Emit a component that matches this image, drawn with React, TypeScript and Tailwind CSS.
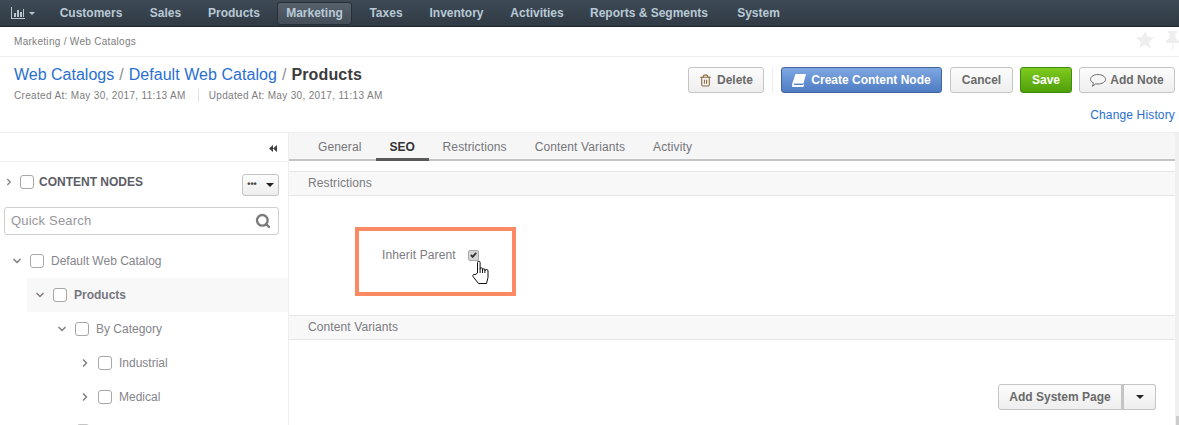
import { ChevronDown, ChevronRight, Search, Trash2 } from 'lucide-react';
import type { ReactNode } from 'react';

// widths are per item because the labels are centred in uneven cells
const NAV_ITEMS = [
  { label: 'Customers', cell: 'w-[92px]' },
  { label: 'Sales', cell: 'w-[57px]' },
  { label: 'Products', cell: 'w-[80px]' },
  { label: 'Marketing', cell: 'ml-[3px] w-[75px] rounded-[3px] border border-[#272e35] bg-gradient-to-b from-[#56616c] to-[#434e59]' },
  { label: 'Taxes', cell: 'w-[68px]' },
  { label: 'Inventory', cell: 'w-[73px]' },
  { label: 'Activities', cell: 'w-[88px]' },
  { label: 'Reports & Segments', cell: 'w-[136px]' },
  { label: 'System', cell: 'w-[83px]' },
];
const TABS = ['General', 'SEO', 'Restrictions', 'Content Variants', 'Activity'];

const Caret = () => <span className="inline-block h-0 w-0 border-x-[4px] border-t-[4px] border-x-transparent border-t-[#222]" />;

const TreeBox = () => <span className="block h-[14px] w-[14px] shrink-0 rounded-[3px] border-[1.5px] border-[#a9a6a6] bg-white" />;

const GreyButton = ({ children, className = '' }: { children: ReactNode; className?: string }) => (
  <button className={`flex items-center justify-center rounded-[3px] border border-[#c4c4c4] bg-gradient-to-b from-[#fcfcfc] to-[#eeeeee] text-xs font-bold text-[#6a6a6a] ${className}`}>
    {children}
  </button>
);

const TreeRow = ({ label, open, depth, active }: { label: string; open: boolean; depth: number; active?: boolean }) => {
  const indents = ['pl-[11px]', 'ml-[27px] pl-[7px] bg-[#f8f8f8]', 'pl-[56px]', 'pl-[79px]'];
  return (
    <div className={`flex h-[34px] items-center ${indents[depth]}`}>
      {open ? (
        <ChevronDown size={12} strokeWidth={3.5} className="mr-[7px] text-[#8b8585]" />
      ) : (
        <ChevronRight size={12} strokeWidth={3.5} className="mr-[7px] text-[#8b8585]" />
      )}
      <TreeBox />
      <span className={`ml-[7px] text-xs ${active ? 'font-bold text-[#77777f]' : 'text-[#85858c]'}`}>{label}</span>
    </div>
  );
};

const SectionBar = ({ label }: { label: string }) => (
  <div className="flex h-[25px] items-center border-y border-[#e6e6e6] bg-[#f8f8f8] pb-[1px] pl-[19px] text-xs tracking-[0.1px] text-[#7a7a7f]">{label}</div>
);

export default function App() {
  return (
    <div className="relative h-[425px] w-[1179px] overflow-hidden bg-white font-['Liberation_Sans',sans-serif]">
      {/* top nav */}
      <nav className="flex h-[27px] items-center border-b border-[#20262c] bg-gradient-to-b from-[#3e4a55] to-[#2f3a44] pl-[11px]">
        <svg width="14" height="12" viewBox="0 0 14 12" className="text-[#b9c6d0]" fill="currentColor">
          <path d="M0 0h1v11h13v1H0z" />
          <path d="M3 6h2v4H3zM6 3h2v7H6zM9 5h2v5H9zM12 2h1v8h-1z" />
        </svg>
        <span className="ml-[4px] h-0 w-0 border-x-[3px] border-t-[3px] border-x-transparent border-t-[#b9c6d0]" />
        <div className="ml-[10px] flex items-center">
          {NAV_ITEMS.map(item => (
            <span key={item.label} className={`flex h-[23px] items-center justify-center text-xs font-bold text-[#b9c9d6] ${item.cell}`}>
              {item.label}
            </span>
          ))}
        </div>
      </nav>

      {/* breadcrumb */}
      <div className="flex h-[30px] items-center justify-between border-b border-[#eeeeee] pl-[14px]">
        <span className="text-[10px] tracking-[0.3px] text-[#7d7d7d]">Marketing / Web Catalogs</span>
        <div className="mb-[4px] flex items-center gap-[12px] text-[#eeeeee]">
          <svg width="18" height="17" viewBox="0 0 18 17" fill="currentColor">
            <path d="M9 0l2.600 5.800 6.400.7-4.800 4.200 1.400 6.300L9 13.800 3.400 17l1.400-6.300L0 6.500l6.400-.7z" />
          </svg>
          <svg width="13" height="18" viewBox="0 0 13 18" fill="currentColor">
            <path d="M2 0h9v2H9.500v5L13 10v2H7.500v6h-1v-6H0v-2l3.500-3V2H2z" />
          </svg>
        </div>
      </div>

      {/* page header */}
      <header className="flex h-[76px] justify-between border-b border-[#eeeeee] pl-[14px] pr-[4px]">
        <div className="pt-[8px]">
          <div className="text-base leading-[19px] text-[#8d8d8d]">
            <span className="text-[#2a6fd0]">Web Catalogs</span>
            <span className="mx-[5px]">/</span>
            <span className="tracking-[0.05px] text-[#2a6fd0]">Default Web Catalog</span>
            <span className="mx-[5px]">/</span>
            <span className="font-bold tracking-[0.15px] text-[#3c3c3c]">Products</span>
          </div>
          <div className="mt-[4px] flex items-center text-[10px] tracking-[0.33px] text-[#7d7d7d]">
            <span>Created At: May 30, 2017, 11:13 AM</span>
            <span className="ml-[12px] mr-[10px] h-[13px] w-px bg-[#e2e2e2]" />
            <span>Updated At: May 30, 2017, 11:13 AM</span>
          </div>
        </div>
        <div className="flex flex-col items-end">
          <div className="mt-[10px] flex items-center">
            <GreyButton className="h-[26px] w-[76px] gap-[5px]">
              <Trash2 size={13} className="text-[#8a6a3f]" />
              Delete
            </GreyButton>
            <span className="mx-[8px] h-[26px] w-px bg-[#eeeeee]" />
            <button className="flex h-[26px] w-[161px] items-center justify-center gap-[5px] rounded-[3px] border border-[#41659b] bg-gradient-to-b from-[#7fa7e2] to-[#4e7cc3] text-xs font-bold text-white">
              <svg width="14" height="13" viewBox="0 0 14 13" fill="currentColor">
                <path d="M3.500 0H14l-2.500 9.500H2.500c-1 0-1.200 1.500-.2 1.500H11l.8-1 .4.400-.8 2.600H1.500C0 13-.3 11.500 0 10.500z" />
              </svg>
              Create Content Node
            </button>
            <GreyButton className="ml-[8px] h-[26px] w-[63px]">Cancel</GreyButton>
            <button className="ml-[7px] h-[26px] w-[52px] rounded-[3px] border border-[#3f8a10] bg-gradient-to-b from-[#7fcb1f] to-[#4f9f08] text-xs font-bold text-white">Save</button>
            <GreyButton className="ml-[7px] h-[26px] w-[96px] gap-[4px]">
              <svg width="16" height="13" viewBox="0 0 16 13" fill="none" stroke="#6a6a6a" strokeWidth="1">
                <path d="M8 .5c4 0 7.500 2 7.500 4.800S12 10 8 10c-.8 0-1.500 0-2.200-.2L2.500 12.300l.9-3.400C1.500 8 .5 6.800.5 5.300.5 2.500 4 .5 8 .5z" />
              </svg>
              Add Note
            </GreyButton>
          </div>
          <span className="mt-[14px] text-xs tracking-[0.15px] text-[#2a6fd0]">Change History</span>
        </div>
      </header>

      <div className="flex h-[292px]">
        {/* left tree */}
        <aside className="w-[289px] shrink-0 border-r border-[#eeeeee]">
          <div className="flex h-[29px] items-center justify-end border-b border-[#eeeeee] pr-[11px] pt-[2px]">
            <svg width="8" height="7" viewBox="0 0 8 7" fill="#3f3f3f">
              <path d="M4 0v7L0 3.500zM8 0v7L4 3.500z" />
            </svg>
          </div>
          <div className="flex h-[45px] items-center pl-[4px] pr-[9px]">
            <div className="mb-[5px] flex items-center">
              <ChevronRight size={10} strokeWidth={3.5} className="text-[#8b8585]" />
              <span className="ml-[6px]"><TreeBox /></span>
              <span className="ml-[5px] text-xs font-bold text-[#5d5d66]">CONTENT NODES</span>
            </div>
            <GreyButton className="ml-auto h-[22px] w-[37px] gap-[9px] text-[#444]">
              <span className="text-[9px] leading-none">•••</span>
              <Caret />
            </GreyButton>
          </div>
          <div className="ml-[4px] mr-[9px] flex h-[28px] items-center justify-between rounded-[3px] border border-[#cfcfcf] pl-[6px] pr-[7px]">
            <span className="text-[13px] tracking-[0.2px] text-[#96969b]">Quick Search</span>
            <Search size={16} strokeWidth={3.5} className="text-[#7a7a7a]" />
          </div>
          <div className="mt-[9px]">
            <TreeRow label="Default Web Catalog" open depth={0} />
            <TreeRow label="Products" open depth={1} active />
            <TreeRow label="By Category" open depth={2} />
            <TreeRow label="Industrial" open={false} depth={3} />
            <TreeRow label="Medical" open={false} depth={3} />
            <div className="ml-[77px] mt-[10px] h-[3px] w-[12px] rounded-t-[3px] border border-b-0 border-[#c4c4c4]" />
          </div>
        </aside>

        {/* content */}
        <main className="min-w-0 flex-1 border-r-[4px] border-[#f0f0f0]">
          <div className="flex h-[28px] items-end border-b-2 border-[#c4c4c4] bg-[#f6f6f6] pl-[15px]">
            {TABS.map(tab => (
              <span
                key={tab}
                className={
                  tab === 'SEO'
                    ? '-mb-[2px] flex h-[28px] w-[53px] items-center justify-center border-b-[3px] border-[#595959] pt-[2px] text-xs font-bold text-[#333]'
                    : 'flex h-[26px] items-center px-[14px] pt-[1px] text-xs tracking-[0.12px] text-[#75757a]'
                }
              >
                {tab}
              </span>
            ))}
          </div>
          <div className="mt-[10px]">
            <SectionBar label="Restrictions" />
          </div>
          <div className="h-[119px] pl-[93px] pt-[51px]">
            <label className="flex items-center">
              <span className="text-xs tracking-[0.12px] text-[#7a7a7f]">Inherit Parent</span>
              <span className="ml-[12px] flex h-[11px] w-[11px] items-center justify-center rounded-[2px] border border-[#a8a8a8] bg-[#d6d6d6]">
                <svg width="7" height="6" viewBox="0 0 9 8" fill="none" stroke="#333" strokeWidth="2.400">
                  <path d="M1 4l2.500 2.500L8 1" />
                </svg>
              </span>
            </label>
          </div>
          <SectionBar label="Content Variants" />
          <div className="flex justify-end pr-[19px] pt-[44px]">
            <GreyButton className="h-[26px] w-[124px] rounded-r-none">Add System Page</GreyButton>
            <GreyButton className="h-[26px] w-[34px] rounded-l-none border-l-2">
              <Caret />
            </GreyButton>
          </div>
        </main>
      </div>

      {/* annotation overlay */}
      <div className="absolute left-[355px] top-[227px] h-[69px] w-[161px] border-[4px] border-[#f98a63]" />
      <svg className="absolute left-[472px] top-[260px]" width="19" height="24" viewBox="0 0 19 24" fill="#fff" stroke="#111" strokeWidth="1">
        <path d="M5.500 13V2.500a1.300 1.300 0 0 1 2.600 0V9a1.200 1.200 0 0 1 2.400 0v1a1.200 1.200 0 0 1 2.400 0v1a1.200 1.200 0 0 1 3.100 0v6.500L14.500 23.500H6.500L1 16.500c-.8-1.500.8-2.700 2-1.800z" />
        <path d="M8.100 9v4M10.500 10v3M12.900 11v2" />
      </svg>
      {/* scrollbar thumb peeking in at the bottom */}
      <div className="absolute left-[1176px] top-[416px] h-[9px] w-[3px] bg-[#cccccc]" />
    </div>
  );
}
